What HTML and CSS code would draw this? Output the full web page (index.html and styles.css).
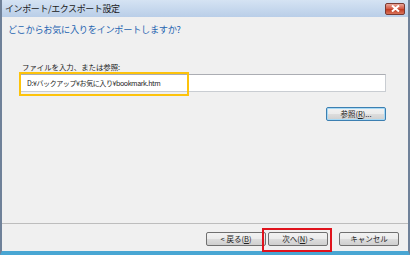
FILE: index.html
```html
<!DOCTYPE html>
<html lang="ja">
<head>
    <meta charset="UTF-8">
    <title>インポート/エクスポート設定</title>
    <link rel="stylesheet" href="styles.css">
</head>
<body>
    <div class="window">
        <div class="titlebar">
            <span class="title">インポート/エクスポート設定</span>
            <span class="close">
                <svg width="9" height="7" viewBox="0 0 9 7"><path d="M1 0.5 L8 6.5 M8 0.5 L1 6.5" stroke="#fff" stroke-width="2"/></svg>
            </span>
        </div>
        <div class="content">
            <h1 class="heading">どこからお気に入りをインポートしますか?</h1>
            <div class="field">
                <label class="label">ファイルを入力、または参照:</label>
                <div class="input-wrap">
                    <div class="input">D:¥バックアップ¥お気に入り¥bookmark.htm</div>
                    <span class="mark-yellow"></span>
                </div>
                <div class="browse-row">
                    <button class="btn btn-focus">参照(<u>R</u>)...</button>
                </div>
            </div>
        </div>
        <div class="footer">
            <button class="btn">&lt; 戻る(<u>B</u>)</button>
            <span class="next-wrap">
                <button class="btn">次へ(<u>N</u>) &gt;</button>
                <span class="mark-red"></span>
            </span>
            <button class="btn btn-cancel">キャンセル</button>
        </div>
    </div>
</body>
</html>
```

FILE: styles.css
```css
body {
    margin: 0;
    padding: 0;
    background: #f0f0f0;
    font-family: "Noto Sans CJK JP", "Liberation Sans", sans-serif;
    color: #222;
}

.window {
    width: 410px;
    height: 255px;
    box-sizing: border-box;
    display: flex;
    flex-direction: column;
    border-left: 2px solid #6f8199;
    border-right: 2px solid #6f8199;
    border-bottom: 4px solid #49a6d3;
    background: #f0f0f0;
}

.titlebar {
    height: 17px;
    flex-shrink: 0;
    display: flex;
    align-items: center;
    justify-content: space-between;
    padding: 0 3px 0 3px;
    background: linear-gradient(#d5e3f3, #b9cee8);
}

.title {
    font-size: 9px;
    color: #1a1a1a;
    letter-spacing: -0.4px;
}

.close {
    width: 20px;
    height: 12px;
    box-sizing: border-box;
    border: 1px solid #7a3a32;
    border-radius: 2px;
    background: linear-gradient(#e8a598, #d2543f 50%, #c0391f 51%, #d9735a);
    display: flex;
    align-items: center;
    justify-content: center;
}

.content {
    flex: 1;
    padding: 0 22px 0 6px;
}

.heading {
    margin: 6px 0 0;
    font-size: 9.2px;
    line-height: 13px;
    font-weight: normal;
    color: #1f64b0;
    letter-spacing: -0.3px;
}

.field {
    margin: 25px 0 0 12px;
}

.label {
    display: block;
    font-size: 7.4px;
    line-height: 11px;
    padding-left: 2px;
}

.input-wrap {
    position: relative;
    margin-top: 2px;
}

.input {
    height: 18px;
    box-sizing: border-box;
    border: 1px solid #c9cdd2;
    border-top-color: #abadb3;
    background: #fff;
    font-size: 7px;
    line-height: 16px;
    padding-left: 6px;
    letter-spacing: -0.4px;
}

.mark-yellow {
    position: absolute;
    left: -1px;
    top: -2px;
    width: 170px;
    height: 24px;
    box-sizing: border-box;
    border: 2px solid #fdc30c;
}

.browse-row {
    display: flex;
    justify-content: flex-end;
    margin-top: 15px;
}

.btn {
    width: 60px;
    height: 14px;
    padding: 0;
    box-sizing: border-box;
    border: 1px solid #707070;
    border-radius: 2px;
    background: linear-gradient(#f2f2f2, #ebebeb 50%, #dddddd 51%, #cfcfcf);
    font-family: inherit;
    font-size: 7.5px;
    line-height: 12px;
    color: #222;
}

.btn-focus {
    border-color: #3c7fb1;
    box-shadow: inset 0 0 0 1px #a7d9f5;
}

.footer {
    height: 28px;
    flex-shrink: 0;
    box-sizing: border-box;
    border-top: 1px solid #bdbdbd;
    display: flex;
    align-items: flex-start;
    justify-content: flex-end;
    gap: 2px;
    padding: 8px 9px 0 0;
}

.next-wrap {
    position: relative;
    display: flex;
}

.mark-red {
    position: absolute;
    left: -6px;
    top: -4px;
    width: 70px;
    height: 24px;
    box-sizing: border-box;
    border: 2px solid #e0131c;
}

.btn-cancel {
    margin-left: 9px;
}
```
